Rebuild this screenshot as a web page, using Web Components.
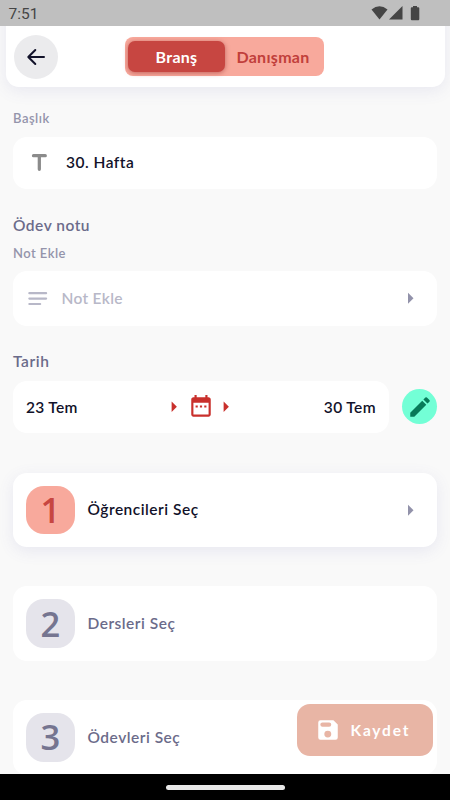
<!DOCTYPE html>
<html lang="tr">
<head>
<meta charset="utf-8">
<meta name="viewport" content="width=device-width, initial-scale=1">
<title>Ödev</title>
<style>
    body {
        margin: 0;
        background: #f9f9f9;
        font-family: Lato, "Open Sans", sans-serif;
        font-weight: 600;
        color: #12122a;
    }
</style>
</head>
<body>
<homework-page></homework-page>

<script>
// small helper, every element here gets an open shadow root
function attach(el, html) {
    el.attachShadow({ mode: "open" }).innerHTML = html;
}

const ICONS = {
    back: '<path d="M20 12H5M11.3 5L4.3 12l7 7" fill="none" stroke="currentColor" stroke-width="2" stroke-linecap="round" stroke-linejoin="round"/>',
    title: '<path d="M6.900 3.800h10.900a1.500 1.500 0 0 1 0 3h-4v11a1.500 1.500 0 0 1-3 0v-11h-3.900a1.500 1.500 0 0 1 0-3z" fill="currentColor"/>',
    notes: '<path d="M4 7.500h15.500M4 12.500h15.500M4 17.500h10" fill="none" stroke="currentColor" stroke-width="2" stroke-linecap="round"/>',
    calendar: '<path d="M19 3h-1V1h-2v2H8V1H6v2H5c-1.110 0-1.990.9-1.990 2L3 19c0 1.100.89 2 2 2h14c1.100 0 2-.9 2-2V5c0-1.100-.9-2-2-2zm0 16H5V8h14v11zM9 10.500H7v2h2zm4 0h-2v2h2zm4 0h-2v2h2z" fill="currentColor"/>',
    pencil: '<path d="M3 17.250V21h3.750L17.810 9.940l-3.750-3.750L3 17.250zM20.710 7.040a1 1 0 0 0 0-1.410l-2.340-2.340a1 1 0 0 0-1.410 0l-1.830 1.830 3.750 3.750 1.830-1.830z" fill="currentColor"/>',
    save: '<path fill-rule="evenodd" d="M5 3h12l4 4v12a2 2 0 0 1-2 2H5a2 2 0 0 1-2-2V5a2 2 0 0 1 2-2zM6.900 5a2 2 0 0 0 0 4h6.100a2 2 0 0 0 0-4zM15 15.800a3.200 3.200 0 1 0-6.400 0 3.200 3.200 0 0 0 6.400 0z" fill="currentColor"/>',
    arrow: '<path d="M9 6.700l5.500 5.500-5.500 5.500z" fill="currentColor"/>'
};

class UiIcon extends HTMLElement {
    connectedCallback() {
        const size = this.getAttribute("size") || 24;
        attach(this, `
            <style>
                :host { display: block; flex: none; width: ${size}px; height: ${size}px; }
                svg { display: block; }
            </style>
            <svg width="${size}" height="${size}" viewBox="0 0 24 24">${ICONS[this.getAttribute("name")]}</svg>
        `);
    }
}
customElements.define("ui-icon", UiIcon);

class StatusBar extends HTMLElement {
    constructor() {
        super();
        attach(this, `
            <style>
                :host {
                    display: flex;
                    align-items: center;
                    justify-content: space-between;
                    box-sizing: border-box;
                    height: 26px;
                    padding: 1px 30px 0 8.500px;
                    background: #bfbfbf;
                    color: #454545;
                    font: 400 15.500px/26px Roboto, sans-serif;
                    position: relative;
                    z-index: 2;
                }
                svg { display: block; margin-top: -2px; }
            </style>
            <span>7:51</span>
            <svg width="49" height="16" viewBox="0 0 49 16" fill="#454545">
                <path d="M.5 4.500Q8.500-2 16.500 4.500L8.500 14.500z"/>
                <path d="M31.500 1v13.500H18z"/>
                <path d="M42 1h4v1.200h1.300q1 0 1 1V14q0 1.200-1 1.200h-6.500q-1 0-1-1.200V3.200q0-1 1-1H42z"/>
            </svg>
        `);
    }
}
customElements.define("status-bar", StatusBar);

class SegmentToggle extends HTMLElement {
    constructor() {
        super();
        attach(this, `
            <style>
                :host {
                    display: flex;
                    box-sizing: border-box;
                    width: 199px;
                    height: 39.500px;
                    padding: 4px 3px;
                    border-radius: 8px;
                    background: #f8a99c;
                    font-size: 16px;
                    font-weight: 700;
                }
                span {
                    display: flex;
                    align-items: center;
                    justify-content: center;
                    width: 97px;
                    height: 31px;
                    border-radius: 7px;
                    color: #c13f3b;
                }
                .on {
                    background: #c74641;
                    color: #fff;
                    box-shadow: 0 1px 5px rgba(150, 40, 40, .55);
                }
            </style>
            <span class="on"><slot name="first"></slot></span>
            <span><slot name="second"></slot></span>
        `);
    }
}
customElements.define("segment-toggle", SegmentToggle);

class TopBar extends HTMLElement {
    constructor() {
        super();
        attach(this, `
            <style>
                :host {
                    display: grid;
                    grid-template-columns: 1fr auto 1fr;
                    align-items: center;
                    box-sizing: border-box;
                    height: 87px;
                    margin: -26px 5.5px 0;
                    padding: 26px 8.500px 0 8px;
                    background: #fff;
                    border-radius: 0 0 13px 13px;
                    box-shadow: 0 4px 16px rgba(90, 90, 170, .10);
                }
                .back {
                    display: flex;
                    align-items: center;
                    justify-content: center;
                    width: 44px;
                    height: 44px;
                    border-radius: 50%;
                    background: #ebebed;
                }
            </style>
            <div class="back"><ui-icon name="back" size="24"></ui-icon></div>
            <slot></slot>
        `);
    }
}
customElements.define("top-bar", TopBar);

class FieldLabel extends HTMLElement {
    constructor() {
        super();
        attach(this, `
            <style>
                :host { display: block; height: 20px; font-size: 13px; line-height: 20px; color: #9494ab; }
                :host([large]) { font-size: 15.5px; line-height: 19px; color: #6b6b8a; }
            </style>
            <slot></slot>
        `);
    }
}
customElements.define("field-label", FieldLabel);

class FieldCard extends HTMLElement {
    constructor() {
        super();
        attach(this, `
            <style>
                :host {
                    display: flex;
                    align-items: center;
                    box-sizing: border-box;
                    height: 52.5px;
                    padding: 0 13px;
                    border-radius: 14px;
                    background: #fff;
                    font-size: 15.500px;
                }
            </style>
            <slot></slot>
        `);
    }
}
customElements.define("field-card", FieldCard);

class StepCard extends HTMLElement {
    constructor() {
        super();
        attach(this, `
            <style>
                :host {
                    display: flex;
                    align-items: center;
                    gap: 13px;
                    box-sizing: border-box;
                    flex: none;
                    height: 74.500px;
                    padding: 0 14px 0 13px;
                    border-radius: 14px;
                    background: #fff;
                    color: #6b6b8a;
                    font-size: 15.500px;
                }
                .num {
                    display: flex;
                    align-items: center;
                    justify-content: center;
                    width: 48.500px;
                    height: 48.500px;
                    border-radius: 18px;
                    background: #e5e4eb;
                    color: #757590;
                    font: 600 34.500px/48px "Open Sans", sans-serif;
                }
                .text { flex: 1; margin-top: -1px; }
                ui-icon { display: none; color: #9292aa; }
                :host([active]) { color: #12122a; box-shadow: 0 4px 16px rgba(90, 90, 170, .11); }
                :host([active]) .num { background: #f8a99c; color: #c74641; }
                :host([active]) ui-icon { display: block; }
            </style>
            <div class="num"><slot name="num"></slot></div>
            <div class="text"><slot></slot></div>
            <ui-icon name="arrow" size="24"></ui-icon>
        `);
    }
}
customElements.define("step-card", StepCard);

class EditButton extends HTMLElement {
    constructor() {
        super();
        attach(this, `
            <style>
                :host {
                    display: flex;
                    align-items: center;
                    justify-content: center;
                    width: 35px;
                    height: 35px;
                    border-radius: 50%;
                    background: #73ffd6;
                    color: #087a59;
                }
            </style>
            <ui-icon name="pencil" size="26"></ui-icon>
        `);
    }
}
customElements.define("edit-button", EditButton);

class SaveButton extends HTMLElement {
    constructor() {
        super();
        attach(this, `
            <style>
                :host {
                    display: flex;
                    align-items: center;
                    gap: 10px;
                    box-sizing: border-box;
                    width: 136px;
                    height: 52.500px;
                    padding-left: 17.500px;
                    border-radius: 13px;
                    background: #e8b5a5;
                    color: #fff;
                    font-size: 15.500px;
                    font-weight: 700;
                }
            </style>
            <ui-icon name="save" size="26"></ui-icon>
            <slot></slot>
        `);
    }
}
customElements.define("save-button", SaveButton);

class NavBar extends HTMLElement {
    constructor() {
        super();
        attach(this, `
            <style>
                :host {
                    display: flex;
                    align-items: center;
                    justify-content: center;
                    flex: none;
                    height: 26px;
                    background: #000;
                    position: relative;
                }
                i { width: 119px; height: 5px; border-radius: 3px; background: #e8e8e8; }
            </style>
            <i></i>
        `);
    }
}
customElements.define("nav-bar", NavBar);

class HomeworkPage extends HTMLElement {
    constructor() {
        super();
        attach(this, `
            <style>
                :host {
                    display: flex;
                    flex-direction: column;
                    height: 800px;
                    overflow: hidden;
                    position: relative;
                }
                main {
                    flex: 1;
                    min-height: 0;
                    padding: 21px 13px 0;
                }
                section { margin-bottom: 26.500px; }
                field-label { margin-bottom: 8.500px; }
                field-label[large] + field-label { margin-top: -1.500px; margin-bottom: 8px; }
                .title ui-icon { color: #8b8b8b; }
                .title span { margin-left: 14px; margin-top: -2px; }
                .note { height: 55px; padding-left: 12px; color: #b8b8c8; }
                .note span { flex: 1; margin-left: 10.500px; }
                .note ui-icon:last-child { color: #9292aa; margin-right: 1px; }
                .row { display: flex; align-items: center; gap: 13px; }
                .dates { flex: 1; display: grid; grid-template-columns: 1fr auto 1fr; }
                .dates div { display: flex; align-items: center; color: #c9302c; gap: 1.500px; margin-right: 1px; }
                .end { text-align: right; }
                .steps { display: flex; flex-direction: column; gap: 39.300px; margin-top: 39.500px; }
                save-button { position: absolute; left: 297px; top: 703.500px; }
            </style>
            <status-bar></status-bar>
            <top-bar>
                <segment-toggle>
                    <span slot="first" style="letter-spacing: .3px">Branş</span>
                    <span slot="second" style="letter-spacing: .3px">Danışman</span>
                </segment-toggle>
            </top-bar>
            <main>
                <section>
                    <field-label><span style="letter-spacing: .5px">Başlık</span></field-label>
                    <field-card class="title">
                        <ui-icon name="title" size="26"></ui-icon>
                        <span style="letter-spacing: .5px">30. Hafta</span>
                    </field-card>
                </section>
                <section>
                    <field-label large><span style="letter-spacing: .5px">Ödev notu</span></field-label>
                    <field-label><span style="letter-spacing: .45px">Not Ekle</span></field-label>
                    <field-card class="note">
                        <ui-icon name="notes" size="26"></ui-icon>
                        <span style="letter-spacing: .3px">Not Ekle</span>
                        <ui-icon name="arrow" size="24"></ui-icon>
                    </field-card>
                </section>
                <section>
                    <field-label large><span style="letter-spacing: .6px">Tarih</span></field-label>
                    <div class="row">
                        <field-card class="dates">
                            <span style="letter-spacing: .3px">23 Tem</span>
                            <div>
                                <ui-icon name="arrow" size="23"></ui-icon>
                                <ui-icon name="calendar" size="26"></ui-icon>
                                <ui-icon name="arrow" size="23"></ui-icon>
                            </div>
                            <span class="end" style="letter-spacing: .4px">30 Tem</span>
                        </field-card>
                        <edit-button></edit-button>
                    </div>
                </section>
                <div class="steps">
                    <step-card active><span slot="num">1</span><span style="letter-spacing: .5px">Öğrencileri Seç</span></step-card>
                    <step-card><span slot="num">2</span><span style="letter-spacing: .5px">Dersleri Seç</span></step-card>
                    <step-card><span slot="num">3</span><span style="letter-spacing: .5px">Ödevleri Seç</span></step-card>
                </div>
            </main>
            <save-button><span style="letter-spacing: 1.800px">Kaydet</span></save-button>
            <nav-bar></nav-bar>
        `);
    }
}
customElements.define("homework-page", HomeworkPage);
</script>
</body>
</html>
